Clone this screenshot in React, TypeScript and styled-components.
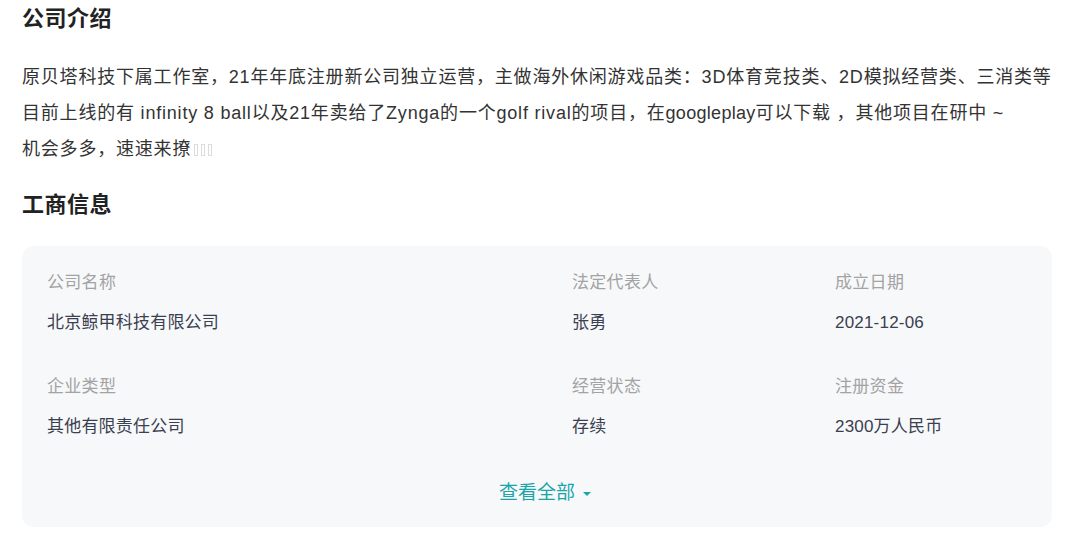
import React from "react";
import styled, { createGlobalStyle } from "styled-components";

const GlobalStyle = createGlobalStyle`
  html, body { margin: 0; padding: 0; background: #fff; }
  body {
    font-family: "Liberation Sans", Arial, "Noto Sans CJK SC", sans-serif;
    -webkit-font-smoothing: antialiased;
  }
  * { box-sizing: border-box; }
`;

const Page = styled.div`
  width: 1077px;
  padding: 5px 25px 0 22px;
  display: flex;
  flex-direction: column;
`;

const SectionTitle = styled.h2<{ $mt: number }>`
  margin: ${(p) => p.$mt}px 0 0;
  font-size: 22px;
  letter-spacing: 0.5px;
  line-height: 28px;
  font-weight: 700;
  color: #222;
`;

const Intro = styled.p`
  margin: 26px 0 0;
  font-size: 18px;
  letter-spacing: 0.8px;
  line-height: 36px;
  color: #333;
`;

const Latin = styled.span`
  letter-spacing: 0.3px;
`;

const Tofu = styled.span`
  display: inline-block;
  width: 4px;
  height: 12px;
  margin-left: 3px;
  border: 1px solid #dcdcdc;
  vertical-align: -1px;
`;

const Card = styled.div`
  margin-top: 27px;
  background: #f7f8fa;
  border-radius: 12px;
  padding: 25px 25px 22px;
  display: flex;
  flex-direction: column;
`;

const Grid = styled.div`
  display: grid;
  grid-template-columns: 525px 263px 1fr;
  row-gap: 40px;
`;

const Field = styled.div`
  display: flex;
  flex-direction: column;
  gap: 16px;
`;

const Label = styled.div`
  font-size: 17px;
  letter-spacing: 0.3px;
  line-height: 24px;
  color: #a3a3a3;
`;

const Value = styled.div`
  font-size: 17px;
  letter-spacing: 0.2px;
  line-height: 24px;
  color: #3b4050;
`;

const More = styled.button`
  align-self: center;
  margin-top: 42px;
  border: none;
  background: none;
  padding: 0 0 0 16px;
  display: flex;
  align-items: center;
  gap: 8px;
  font-family: inherit;
  font-size: 19px;
  line-height: 24px;
  color: #1aa5a8;
  cursor: pointer;
`;

const Caret = styled.span`
  width: 0;
  height: 0;
  border-left: 4px solid transparent;
  border-right: 4px solid transparent;
  border-top: 4px solid #1aa5a8;
  margin-top: 2px;
`;

const fields = [
  { label: "公司名称", value: "北京鲸甲科技有限公司" },
  { label: "法定代表人", value: "张勇" },
  { label: "成立日期", value: "2021-12-06" },
  { label: "企业类型", value: "其他有限责任公司" },
  { label: "经营状态", value: "存续" },
  { label: "注册资金", value: "2300万人民币" },
];

export default function App() {
  return (
    <>
      <GlobalStyle />
      <Page>
        <SectionTitle $mt={0}>公司介绍</SectionTitle>
        <Intro>
          原贝塔科技下属工作室，21年年底注册新公司独立运营，主做海外休闲游戏品类：3D体育竞技类、2D模拟经营类、三消类等
          <br />
          目前上线的有 infinity 8 ball以及21年卖给了Zynga的一个golf rival的项目，在<Latin>googleplay</Latin>可以下载 ，其他项目在研中 ~
          <br />
          机会多多，速速来撩
          <Tofu />
          <Tofu />
          <Tofu />
        </Intro>
        <SectionTitle $mt={24}>工商信息</SectionTitle>
        <Card>
          <Grid>
            {fields.map((f) => (
              <Field key={f.label}>
                <Label>{f.label}</Label>
                <Value>{f.value}</Value>
              </Field>
            ))}
          </Grid>
          <More type="button">
            查看全部
            <Caret />
          </More>
        </Card>
      </Page>
    </>
  );
}
